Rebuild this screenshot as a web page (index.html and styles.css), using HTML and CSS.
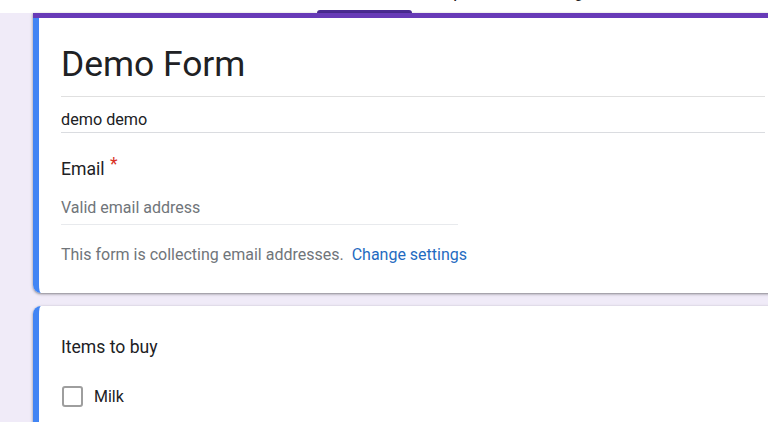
FILE: index.html
```html
<!DOCTYPE html>
<html lang="en">
<head>
<meta charset="utf-8">
<title>Demo Form</title>
<link rel="stylesheet" href="styles.css">
</head>
<body>
<header class="topbar">
  <nav class="tabs">
    <div class="tab tab-questions active"><span class="tab-label">Questions</span><span class="tab-ind"></span></div>
    <div class="tab tab-responses"><span class="tab-label">Responses</span><span class="tab-ind"></span></div>
    <div class="tab tab-settings"><span class="tab-label">Settings</span><span class="tab-ind"></span></div>
  </nav>
</header>
<main class="canvas">
  <section class="card card-head">
    <div class="band"></div>
    <div class="card-body head-body">
      <div class="form-title">Demo Form</div>
      <div class="form-desc">demo demo</div>
      <div class="question-title">Email <span class="req">*</span></div>
      <div class="answer-field">Valid email address</div>
      <div class="collect-note">This form is collecting email addresses.&nbsp; <span class="link">Change settings</span></div>
    </div>
  </section>
  <section class="card card-q">
    <div class="card-body q-body">
      <div class="question-title">Items to buy</div>
      <div class="option">
        <span class="checkbox"></span>
        <span class="option-label">Milk</span>
      </div>
    </div>
  </section>
</main>
</body>
</html>
```
FILE: styles.css
```css
html, body {
  margin: 0;
  padding: 0;
}
body {
  width: 768px;
  height: 422px;
  overflow: hidden;
  background: #f0ebf8;
  font-family: Roboto, "Liberation Sans", Arial, sans-serif;
  color: #202124;
}
.topbar {
  height: 13px;
  background: #ffffff;
  overflow: hidden;
  display: flex;
  align-items: flex-end;
}
.tabs {
  display: flex;
  align-items: flex-end;
  padding-left: 317px;
}
.tab {
  display: flex;
  flex-direction: column;
  align-items: center;
  font-size: 14px;
  font-weight: 500;
  color: #202124;
}
.tab-label {
  line-height: 14px;
  margin-bottom: 10px;
  white-space: nowrap;
}
.tab-ind {
  align-self: stretch;
  height: 3px;
  border-radius: 3px 3px 0 0;
}
.tab-questions { width: 95px; }
.tab-responses { margin-left: 18px; }
.tab-settings { margin-left: 39px; }
.tab.active .tab-ind { background: #4b2b93; }

.canvas {
  padding-left: 33px;
  display: flex;
  flex-direction: column;
  gap: 13px;
}
.card {
  width: 756px;
  background: #ffffff;
  box-shadow: 0 1px 2px rgba(0,0,0,0.3), 0 1px 3px 1px rgba(0,0,0,0.12);
}
.card-head {
  border-radius: 0 0 8px 8px;
}
.band {
  height: 5px;
  background: #673ab7;
}
.card-body {
  border-left: 6px solid #4285f4;
  padding-left: 22px;
  padding-right: 24px;
}
.head-body {
  border-radius: 0 0 8px 8px;
  padding-top: 25.5px;
  padding-bottom: 29px;
}
.card-q {
  border-radius: 8px 8px 0 0;
}
.q-body {
  border-radius: 8px 0 0 0;
  padding-top: 31px;
  height: 200px;
}
.form-title {
  font-size: 35.4px;
  line-height: 41px;
  padding-bottom: 11px;
  border-bottom: 1px solid #e0e0e0;
}
.form-desc {
  margin-top: 13.5px;
  font-size: 16.2px;
  line-height: 19px;
  padding-bottom: 3px;
  border-bottom: 1px solid #dadce0;
}
.question-title {
  font-size: 17.6px;
  line-height: 21px;
}
.head-body .question-title {
  margin-top: 25.5px;
}
.req {
  color: #d93025;
  font-size: 17.5px;
  position: relative;
  top: -5px;
  margin-left: 1px;
}
.answer-field {
  margin-top: 19px;
  width: 397px;
  font-size: 16px;
  line-height: 18px;
  color: #70757a;
  padding-bottom: 7px;
  border-bottom: 1px solid #e8eaed;
}
.collect-note {
  margin-top: 21px;
  font-size: 16px;
  line-height: 18px;
  color: #70757a;
}
.link {
  color: #1f6bc1;
}
.option {
  margin-top: 28px;
  display: flex;
  align-items: center;
  gap: 11px;
  padding-left: 1px;
}
.checkbox {
  width: 17px;
  height: 17px;
  border: 2px solid #9e9e9e;
  border-radius: 3px;
  box-sizing: content-box;
}
.option-label {
  font-size: 16px;
  line-height: 19px;
}
```
